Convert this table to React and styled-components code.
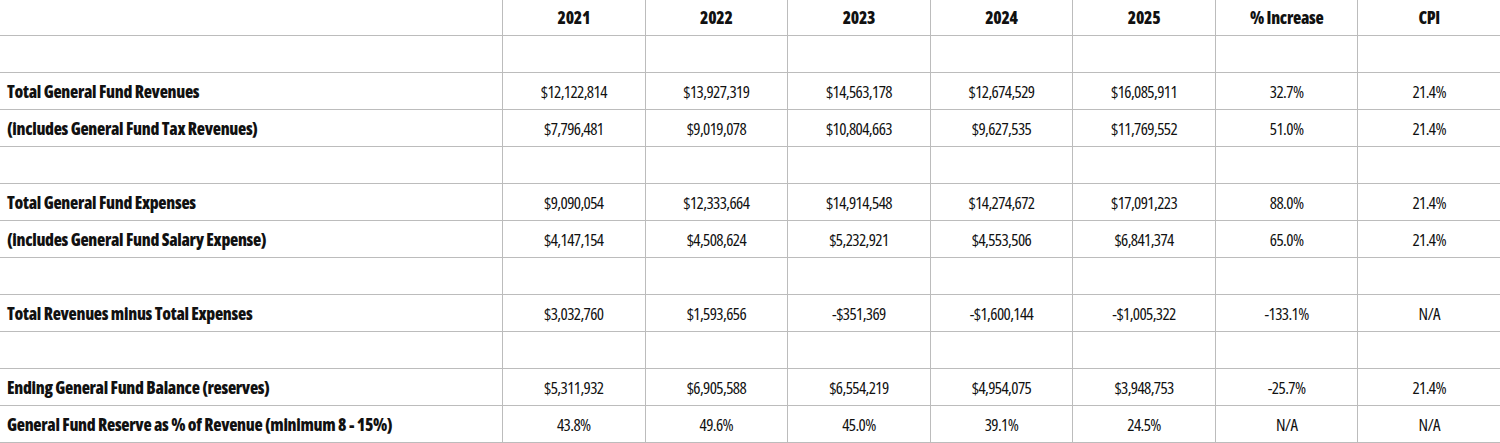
import React from 'react';
import styled, { createGlobalStyle } from 'styled-components';

const GlobalStyle = createGlobalStyle`
  body {
    margin: 0;
    background: #fff;
    font-family: "Open Sans", "Liberation Sans", sans-serif;
    font-stretch: 75%;
    color: #111;
  }
`;

const Table = styled.div`
  width: 1500px;
  display: grid;
  grid-template-columns: 502px repeat(7, 1fr);
`;

const Row = styled.div`
  display: contents;
`;

const Cell = styled.div`
  height: 36px;
  border-bottom: 1px solid #bcbcbc;
  border-left: 1px solid #bcbcbc;
  display: flex;
  align-items: center;
  justify-content: center;
  font-size: 17px;
  font-weight: 500;
  letter-spacing: -0.6px;
  white-space: nowrap;
`;

const HeadCell = styled(Cell)`
  height: 35px;
  font-weight: 800;
  letter-spacing: -0.3px;
`;

const LabelCell = styled(Cell)`
  border-left: none;
  justify-content: flex-start;
  padding-left: 7px;
  font-weight: 800;
  letter-spacing: -0.3px;
`;

const CornerCell = styled(HeadCell)`
  border-left: none;
`;

const columns = ['2021', '2022', '2023', '2024', '2025', '% Increase', 'CPI'];

const rows = [
  null,
  ['Total General Fund Revenues', '$12,122,814', '$13,927,319', '$14,563,178', '$12,674,529', '$16,085,911', '32.7%', '21.4%'],
  ['(includes General Fund Tax Revenues)', '$7,796,481', '$9,019,078', '$10,804,663', '$9,627,535', '$11,769,552', '51.0%', '21.4%'],
  null,
  ['Total General Fund Expenses', '$9,090,054', '$12,333,664', '$14,914,548', '$14,274,672', '$17,091,223', '88.0%', '21.4%'],
  ['(includes General Fund Salary Expense)', '$4,147,154', '$4,508,624', '$5,232,921', '$4,553,506', '$6,841,374', '65.0%', '21.4%'],
  null,
  ['Total Revenues minus Total Expenses', '$3,032,760', '$1,593,656', '-$351,369', '-$1,600,144', '-$1,005,322', '-133.1%', 'N/A'],
  null,
  ['Ending General Fund Balance (reserves)', '$5,311,932', '$6,905,588', '$6,554,219', '$4,954,075', '$3,948,753', '-25.7%', '21.4%'],
  ['General Fund Reserve as % of Revenue (minimum 8 - 15%)', '43.8%', '49.6%', '45.0%', '39.1%', '24.5%', 'N/A', 'N/A'],
];

export default function App() {
  return (
    <>
      <GlobalStyle />
      <Table>
        <Row>
          <CornerCell />
          {columns.map(c => (
            <HeadCell key={c}>{c}</HeadCell>
          ))}
        </Row>
        {rows.map((r, i) => {
          const [label, ...values] = r || Array(8).fill('');
          return (
            <Row key={i}>
              <LabelCell>{label}</LabelCell>
              {values.map((v, j) => (
                <Cell key={j}>{v}</Cell>
              ))}
            </Row>
          );
        })}
      </Table>
    </>
  );
}
